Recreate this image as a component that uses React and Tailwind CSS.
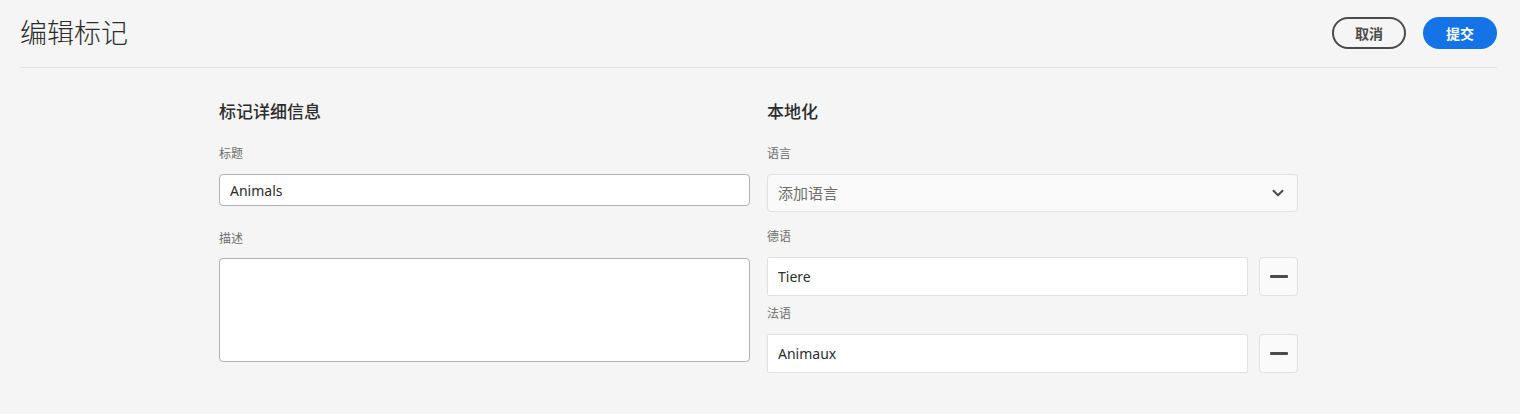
import { useState } from 'react';

const font = { fontFamily: '"Noto Sans", "Noto Sans CJK SC", sans-serif' };

function Label({ children }) {
  return <div className="h-4 text-[12px] leading-4 text-[#6e6e6e]">{children}</div>;
}

function MinusButton() {
  return (
    <button className="flex h-[39px] w-[39px] shrink-0 items-center justify-center rounded-[4px] border border-[#e1e1e1] bg-[#fafafa]">
      <span className="block h-[3px] w-[18px] rounded-[1px] bg-[#4b4b4b]" />
    </button>
  );
}

export default function App() {
  const [title, setTitle] = useState('Animals');
  const [desc, setDesc] = useState('');
  const [langs, setLangs] = useState([
    { name: '德语', value: 'Tiere' },
    { name: '法语', value: 'Animaux' },
  ]);

  return (
    <div className="min-h-[414px] bg-[#f5f5f5] text-[#2c2c2c]" style={font}>
      {/* Header */}
      <div className="ml-5 mr-[23px] flex items-center justify-between border-b border-[#e4e4e4] pt-[17px] pb-[18px]">
        <h1 className="text-[27px] font-light leading-8 text-[#2c2c2c]">编辑标记</h1>
        <div className="flex gap-[17px]">
          <button className="h-8 w-[74px] rounded-full border-2 border-[#4b4b4b] text-[14px] font-bold text-[#4b4b4b]">
            取消
          </button>
          <button className="h-8 w-[74px] rounded-full bg-[#1473e6] text-[14px] font-bold text-white">
            提交
          </button>
        </div>
      </div>

      {/* Body */}
      <div className="ml-[219px] mt-[32px] flex w-[1079px] gap-[17px]">
        {/* Left column */}
        <div className="w-[531px]">
          <h2 className="h-6 text-[17px] font-medium leading-6 text-[#2c2c2c]">标记详细信息</h2>
          <div className="mt-[22px]">
            <Label>标题</Label>
          </div>
          <input
            value={title}
            onChange={(e) => setTitle(e.target.value)}
            className="mt-3 h-8 w-full rounded-[4px] border border-[#b3b3b3] bg-white px-[10px] text-[14px] text-[#2c2c2c] outline-none"
          />
          <div className="mt-[25px]">
            <Label>描述</Label>
          </div>
          <textarea
            value={desc}
            onChange={(e) => setDesc(e.target.value)}
            className="mt-[11px] block h-[104px] w-full resize-none rounded-[4px] border border-[#b3b3b3] bg-white px-[10px] py-2 text-[14px] outline-none"
          />
        </div>

        {/* Right column */}
        <div className="w-[531px]">
          <h2 className="h-6 text-[17px] font-medium leading-6 text-[#2c2c2c]">本地化</h2>
          <div className="mt-[22px]">
            <Label>语言</Label>
          </div>
          <button className="mt-3 flex h-[38px] w-full items-center justify-between rounded-[4px] border border-[#e1e1e1] bg-[#fafafa] pl-[10px] pr-[12px] text-[15px] text-[#6e6e6e]">
            <span>添加语言</span>
            <svg width="14" height="14" viewBox="0 0 14 14" fill="none">
              <path d="M2.5 4.8 7 9.2l4.5-4.4" stroke="#4b4b4b" strokeWidth="2" strokeLinecap="round" strokeLinejoin="round" />
            </svg>
          </button>
          {langs.map((l, i) => (
            <div key={l.name} className={i === 0 ? 'mt-[17px]' : 'mt-[10px]'}>
              <Label>{l.name}</Label>
              <div className="mt-3 flex gap-[11px]">
                <input
                  value={l.value}
                  onChange={(e) =>
                    setLangs(langs.map((x, j) => (j === i ? { ...x, value: e.target.value } : x)))
                  }
                  className="h-[39px] w-full rounded-[2px] border border-[#e1e1e1] bg-white px-[10px] text-[14px] text-[#2c2c2c] outline-none"
                />
                <MinusButton />
              </div>
            </div>
          ))}
        </div>
      </div>
    </div>
  );
}
